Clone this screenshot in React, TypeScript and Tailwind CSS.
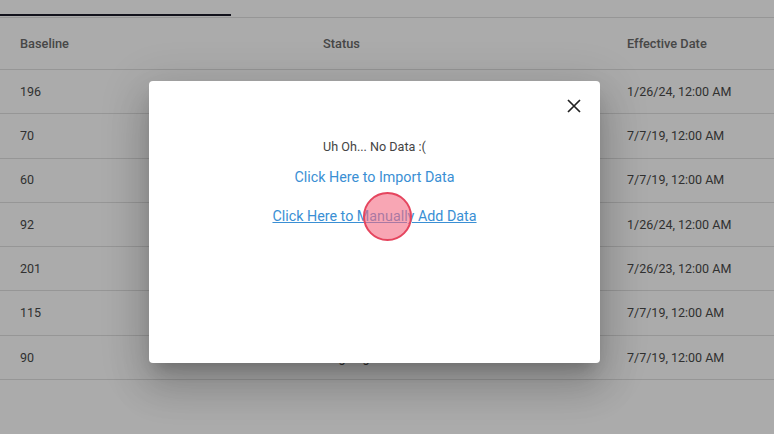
import React from "react";

const rows = [
  { baseline: "196", status: "Ongoing", date: "1/26/24, 12:00 AM" },
  { baseline: "70", status: "Ongoing", date: "7/7/19, 12:00 AM" },
  { baseline: "60", status: "Ongoing", date: "7/7/19, 12:00 AM" },
  { baseline: "92", status: "Ongoing", date: "1/26/24, 12:00 AM" },
  { baseline: "201", status: "Ongoing", date: "7/26/23, 12:00 AM" },
  { baseline: "115", status: "Ongoing", date: "7/7/19, 12:00 AM" },
  { baseline: "90", status: "Ongoing", date: "7/7/19, 12:00 AM" },
];

// table sitting behind the dialog
function DataTable() {
  return (
    <div className="w-full">
      <div className="h-[18px] border-b border-[#e0e0e0] flex items-end pb-px">
        <div className="h-[2px] w-[231px] bg-[#1c1c2a]" />
      </div>
      <div className="grid grid-cols-[303px_304px_1fr] h-[52px] items-center border-b border-[#e0e0e0] text-[12.8px] font-medium text-[#6a6a6a]">
        <div className="pl-5">Baseline</div>
        <div className="pl-5">Status</div>
        <div className="pl-5">Effective Date</div>
      </div>
      {rows.map((row, i) => (
        <div
          key={i}
          className="grid grid-cols-[303px_304px_1fr] h-[44.3px] items-center border-b border-[#e0e0e0] text-[12.5px] text-[#4a4a4a]"
        >
          <div className="pl-5 pt-px">{row.baseline}</div>
          <div className="pl-5 pt-px">{row.status}</div>
          <div className="pl-5 pt-px">{row.date}</div>
        </div>
      ))}
    </div>
  );
}

export default function App() {
  return (
    <div
      className="relative w-[774px] h-[434px] overflow-hidden bg-white"
      style={{ fontFamily: "Roboto, 'Liberation Sans', sans-serif" }}
    >
      <DataTable />

      {/* backdrop */}
      <div className="absolute inset-0 bg-black/[0.33]" />

      {/* dialog */}
      <div className="absolute left-[149px] top-[81px] w-[451px] h-[282px] rounded bg-white shadow-[0_11px_15px_-7px_rgba(0,0,0,0.2),0_24px_38px_3px_rgba(0,0,0,0.14),0_9px_46px_8px_rgba(0,0,0,0.12)]">
        <button type="button" className="absolute right-[16px] top-[15px] p-0.5 text-[#222]">
          <svg width="16" height="16" viewBox="0 0 16 16" fill="none">
            <path d="M2 2L14 14M14 2L2 14" stroke="currentColor" strokeWidth="1.7" />
          </svg>
        </button>
        <div className="flex flex-col items-center pt-[58px]">
          <p className="text-[12.6px] text-[#444] leading-4">Uh Oh... No Data :(</p>
          <a className="mt-[12px] text-[14.3px] text-[#3a8fd4] leading-5 cursor-pointer">
            Click Here to Import Data
          </a>
          <a className="mt-[19px] text-[14.3px] text-[#3a8fd4] leading-5 underline cursor-pointer">
            Click Here to Manually Add Data
          </a>
        </div>
      </div>

      {/* click indicator */}
      <div className="absolute left-[363px] top-[192px] w-[49px] h-[49px] rounded-full border-2 border-[#e5455e] bg-[#f36a82]/60" />
    </div>
  );
}
